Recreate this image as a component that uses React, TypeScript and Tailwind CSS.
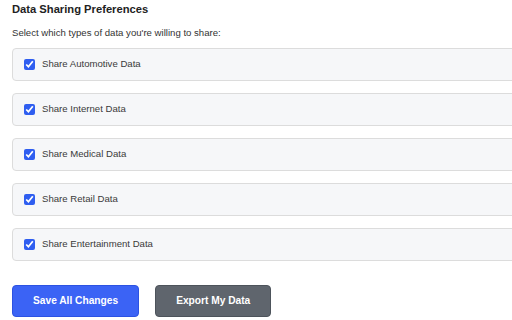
import { useState } from 'react';

const CATEGORIES = ['Automotive', 'Internet', 'Medical', 'Retail', 'Entertainment'];

export default function App() {
  const [checked, setChecked] = useState<Record<string, boolean>>(
    Object.fromEntries(CATEGORIES.map((c) => [c, true]))
  );

  return (
    <div className="w-[512px] h-[320px] overflow-hidden bg-white px-[12px] font-['Liberation_Sans',Arial,sans-serif]">
      <h2 className="pt-[2px] text-[11.2px] leading-[14px] font-bold text-[#222]">Data Sharing Preferences</h2>
      <p className="mt-[11px] text-[9.6px] leading-[12px] text-[#333]">Select which types of data you're willing to share:</p>

      <div className="mt-[9px] flex flex-col gap-[12px] w-[560px]">
        {CATEGORIES.map((cat) => (
          <label
            key={cat}
            className="flex items-center gap-[7px] h-[33px] pl-[11px] rounded-[4px] border border-[#dcdcdc] bg-[#f6f7f9] cursor-pointer"
          >
            <input
              type="checkbox"
              checked={checked[cat]}
              onChange={(e) => setChecked({ ...checked, [cat]: e.target.checked })}
              className="m-0 w-[11px] h-[11px] accent-[#2f5ef0]"
            />
            <span className="text-[9.6px] text-[#3a3a3a]">Share {cat} Data</span>
          </label>
        ))}
      </div>

      <div className="mt-[24px] flex gap-[16px]">
        <button className="h-[32px] px-[20px] rounded-[4px] border border-[#2c52e2] bg-[#3b63f5] text-white text-[10.2px] font-bold">
          Save All Changes
        </button>
        <button className="h-[32px] px-[20px] rounded-[4px] border border-[#4d535b] bg-[#5f656d] text-white text-[10.2px] font-bold">
          Export My Data
        </button>
      </div>
    </div>
  );
}
